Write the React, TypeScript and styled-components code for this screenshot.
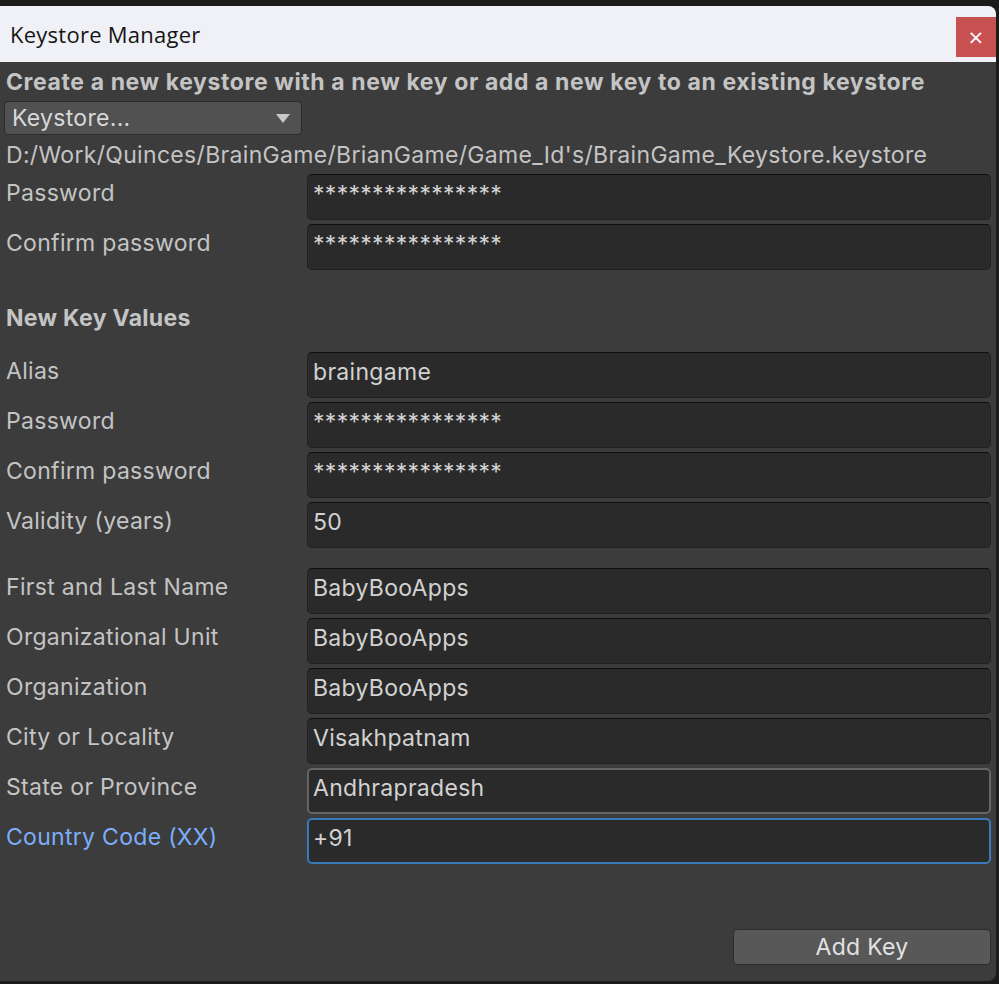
import React from "react";
import styled, { createGlobalStyle } from "styled-components";

const Global = createGlobalStyle`
  html, body { margin: 0; padding: 0; background: #1b1b1b; }
  body { width: 999px; height: 984px; overflow: hidden; }
  #root { width: 999px; height: 984px; }
`;

const Screen = styled.div`
  width: 999px;
  height: 984px;
  display: flex;
  flex-direction: column;
  padding-top: 6px;
  box-sizing: border-box;
  background: #1b1b1b;
`;

const Window = styled.div`
  width: 996px;
  height: 975px;
  display: flex;
  flex-direction: column;
  border-radius: 0 8px 8px 0;
  overflow: hidden;
  background: #3c3c3c;
`;

const TitleBar = styled.div`
  height: 56px;
  background: #f0f1f6;
  display: flex;
  align-items: center;
  justify-content: space-between;
  padding-left: 10px;
  box-sizing: border-box;
`;

const Title = styled.div`
  font-family: "Open Sans", "Noto Sans", sans-serif;
  font-size: 22px;
  color: #151515;
  letter-spacing: 0.25px;
`;

const CloseButton = styled.div`
  width: 40px;
  height: 40px;
  margin-top: 6px;
  background: #c75050;
  color: #ffffff;
  display: flex;
  align-items: center;
  justify-content: center;
  font-family: "DejaVu Sans", sans-serif;
  font-size: 20px;
`;

const Panel = styled.div`
  flex: 1;
  display: flex;
  flex-direction: column;
  padding: 0 5px 0 4px;
  font-family: Inter, "Noto Sans", sans-serif;
  font-size: 23px;
  letter-spacing: 0.3px;
  color: #c4c4c4;
`;

const Intro = styled.div`
  font-weight: 700;
  line-height: 26px;
  padding: 7px 0 0 2px;
  letter-spacing: 0.6px;
  white-space: nowrap;
`;

const Dropdown = styled.div`
  margin-top: 6px;
  width: 298px;
  height: 34px;
  box-sizing: border-box;
  background: #515151;
  border: 1px solid #2b2b2b;
  border-radius: 4px;
  display: flex;
  align-items: center;
  justify-content: space-between;
  padding: 0 11px 0 7px;
  color: #d8d8d8;
`;

const Arrow = styled.div`
  width: 0;
  height: 0;
  border-left: 7px solid transparent;
  border-right: 7px solid transparent;
  border-top: 9px solid #c8c8c8;
`;

const Path = styled.div`
  margin-top: 7px;
  line-height: 26px;
  padding-left: 2px;
  white-space: nowrap;
  letter-spacing: 0.32px;
`;

const Rows = styled.div<{ $top: number }>`
  margin-top: ${(p) => p.$top}px;
  display: flex;
  flex-direction: column;
  gap: 4px;
`;

const Row = styled.div`
  display: grid;
  grid-template-columns: 303px 1fr;
  height: 46px;
`;

const Label = styled.div<{ $focus?: boolean }>`
  padding: 6px 0 0 2px;
  line-height: 26px;
  color: ${(p) => (p.$focus ? "#7baefa" : "#c4c4c4")};
`;

const Field = styled.div<{ $state?: "hover" | "focus" }>`
  box-sizing: border-box;
  background: #2a2a2a;
  border: 1px solid
    ${(p) =>
      p.$state === "focus" ? "#3a79bb" : p.$state === "hover" ? "#656565" : "#212121"};
  border-top-color: ${(p) =>
    p.$state === "focus" ? "#3a79bb" : p.$state === "hover" ? "#656565" : "#0d0d0d"};
  border-width: ${(p) => (p.$state ? "2px" : "1px")};
  border-radius: 5px;
  padding: ${(p) => (p.$state ? "5px 4px" : "6px 5px")};
  line-height: 26px;
  color: #d2d2d2;
  white-space: nowrap;
  overflow: hidden;
`;

const Heading = styled.div`
  font-weight: 700;
  margin-top: 35px;
  line-height: 26px;
  padding-left: 2px;
`;

const Footer = styled.div`
  margin-top: 65px;
  display: flex;
  justify-content: flex-end;
`;

const Button = styled.div`
  width: 258px;
  height: 36px;
  box-sizing: border-box;
  background: #585858;
  border: 1px solid #2b2b2b;
  border-radius: 4px;
  display: flex;
  align-items: center;
  justify-content: center;
  color: #e2e2e2;
`;

type RowData = { label: string; value: string; state?: "hover" | "focus" };

const keystoreRows: RowData[] = [
  { label: "Password", value: "****************" },
  { label: "Confirm password", value: "****************" },
];

const keyRows: RowData[] = [
  { label: "Alias", value: "braingame" },
  { label: "Password", value: "****************" },
  { label: "Confirm password", value: "****************" },
  { label: "Validity (years)", value: "50" },
];

const identityRows: RowData[] = [
  { label: "First and Last Name", value: "BabyBooApps" },
  { label: "Organizational Unit", value: "BabyBooApps" },
  { label: "Organization", value: "BabyBooApps" },
  { label: "City or Locality", value: "Visakhpatnam" },
  { label: "State or Province", value: "Andhrapradesh", state: "hover" },
  { label: "Country Code (XX)", value: "+91", state: "focus" },
];

const FieldRows = ({ rows, top }: { rows: RowData[]; top: number }) => (
  <Rows $top={top}>
    {rows.map((r, i) => (
      <Row key={i}>
        <Label $focus={r.state === "focus"}>{r.label}</Label>
        <Field $state={r.state}>{r.value}</Field>
      </Row>
    ))}
  </Rows>
);

export default function App() {
  return (
    <>
      <Global />
      <Screen>
        <Window>
          <TitleBar>
            <Title>Keystore Manager</Title>
            <CloseButton>×</CloseButton>
          </TitleBar>
          <Panel>
            <Intro>Create a new keystore with a new key or add a new key to an existing keystore</Intro>
            <Dropdown>
              <span>Keystore...</span>
              <Arrow />
            </Dropdown>
            <Path>D:/Work/Quinces/BrainGame/BrianGame/Game_Id's/BrainGame_Keystore.keystore</Path>
            <FieldRows rows={keystoreRows} top={6} />
            <Heading>New Key Values</Heading>
            <FieldRows rows={keyRows} top={21} />
            <FieldRows rows={identityRows} top={20} />
            <Footer>
              <Button>Add Key</Button>
            </Footer>
          </Panel>
        </Window>
      </Screen>
    </>
  );
}
